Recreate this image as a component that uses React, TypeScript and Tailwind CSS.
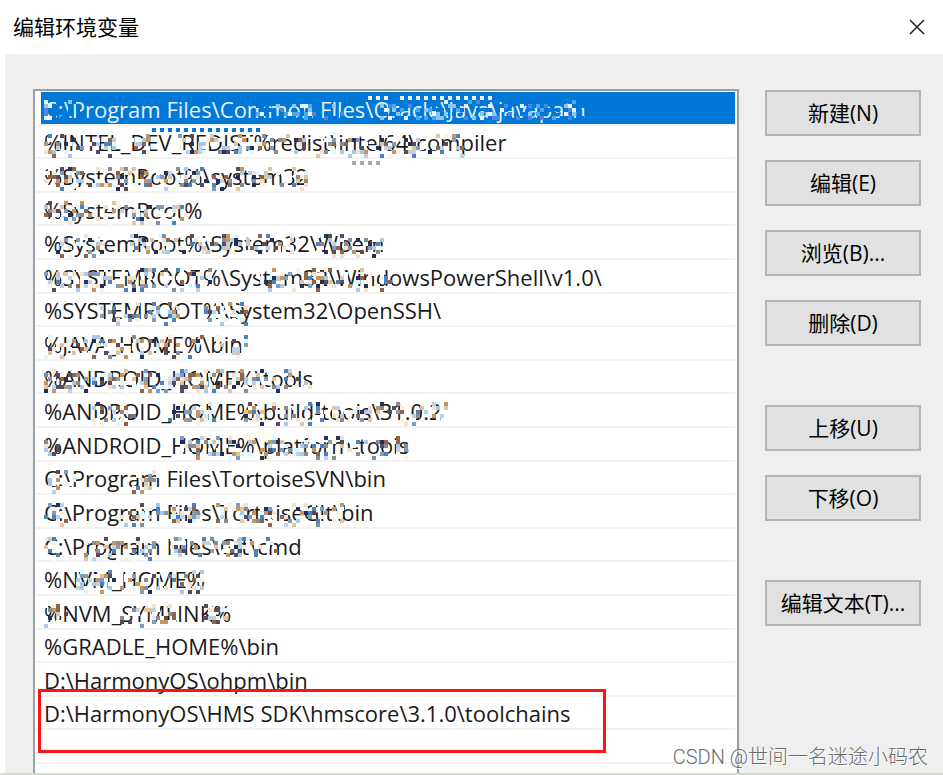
import { useState } from "react";

type Range = [number, number];

interface Dots {
  from: number;
  to: number;
  y: number;
  color: string;
}

interface Entry {
  path: string;
  // horizontal spans of the row that are scrambled, measured from the text start
  masked?: Range[];
  dots?: Dots[];
}

const ENTRIES: Entry[] = [
  {
    path: "C:\\Program Files\\Common Files\\Oracle\\Java\\javapath",
    masked: [[0, 40], [212, 300], [336, 540]],
    dots: [
      { from: 324, to: 344, y: -4, color: "#f1f1f1" },
      { from: 356, to: 450, y: -4, color: "#f1f1f1" },
      { from: 108, to: 216, y: 28, color: "#0078d7" },
    ],
  },
  {
    path: "%INTEL_DEV_REDIST%redist\\intel64\\compiler",
    masked: [[0, 72], [86, 104], [134, 260], [272, 420]],
    dots: [{ from: 308, to: 336, y: 27, color: "#a6a6ac" }],
  },
  { path: "%SystemRoot%\\system32", masked: [[0, 264]] },
  { path: "%SystemRoot%", masked: [[0, 144]] },
  { path: "%SystemRoot%\\System32\\Wbem", masked: [[12, 64], [86, 250], [272, 340]] },
  { path: "%SYSTEMROOT%\\System32\\WindowsPowerShell\\v1.0\\", masked: [[0, 166], [212, 348]] },
  { path: "%SYSTEMROOT%\\System32\\OpenSSH\\", masked: [[56, 136], [160, 204]] },
  { path: "%JAVA_HOME%\\bin", masked: [[0, 204]] },
  { path: "%ANDROID_HOME%\\tools", masked: [[0, 268]] },
  { path: "%ANDROID_HOME%\\build-tools\\31.0.2", masked: [[48, 96], [124, 172], [200, 402]] },
  { path: "%ANDROID_HOME%\\platform-tools", masked: [[0, 16], [136, 364]] },
  { path: "C:\\Program Files\\TortoiseSVN\\bin", masked: [[0, 32], [88, 114]] },
  { path: "C:\\Program Files\\TortoiseGit\\bin", masked: [[0, 24], [76, 156], [172, 300]] },
  { path: "C:\\Program Files\\Git\\cmd", masked: [[0, 16], [40, 112], [126, 232]] },
  { path: "%NVM_HOME%", masked: [[32, 160]] },
  { path: "%NVM_SYMLINK%", masked: [[0, 24], [76, 132], [160, 188]] },
  { path: "%GRADLE_HOME%\\bin" },
  { path: "D:\\HarmonyOS\\ohpm\\bin" },
  { path: "D:\\HarmonyOS\\HMS SDK\\hmscore\\3.1.0\\toolchains" },
  { path: "" },
];

const BUTTON_GROUPS = [
  ["新建(N)", "编辑(E)", "浏览(B)...", "删除(D)"],
  ["上移(U)", "下移(O)"],
  ["编辑文本(T)..."],
];

const SPECKS = [
  "#24305c", "#8f6449", "#f3e2cb", "#a9c9ea", "#4a82bd", "#dff8ff", "#564a5c", "#c4955c",
  "#ffffff", "#dfc3a2", "#7f9bbd", "#ffffff", "#fdf2dc", "#b9d3ea", "#8b8b92", "#ffffff",
];
const SELECTED_SPECKS = ["#0078d7", "#4aa8ee", "#e6f2fc", "#4d86dc", "#0078d7", "#8cc6f5", "#0078d7"];

function noise(row: number, x: number, y: number) {
  const n = Math.sin(row * 91.7 + x * 12.9898 + y * 78.233) * 43758.5453;
  return n - Math.floor(n);
}

function Mosaic({ row, entry, selected }: { row: number; entry: Entry; selected: boolean }) {
  const colors = selected ? SELECTED_SPECKS : SPECKS;
  const cells = [];
  for (const [from, to] of entry.masked ?? []) {
    for (let x = from; x < to; x += 4) {
      for (let y = 0; y < 6; y++) {
        // the last line only keeps every other cell
        if (y === 5 && (x % 8 !== 0 || selected)) continue;
        const n = noise(row, x, y);
        if (n > (y === 0 ? 0.2 : 0.42)) continue;
        const color = colors[Math.floor(noise(row + 7, x, y) * colors.length)];
        cells.push(<rect key={`${x}-${y}`} x={x} y={y * 4} width="4" height="4" fill={color} />);
      }
    }
  }
  for (const d of entry.dots ?? []) {
    for (let x = d.from; x <= d.to; x += 8) {
      cells.push(<rect key={`dot-${x}-${d.y}`} x={x} y={d.y} width="4" height="4" fill={d.color} />);
    }
  }
  return (
    <svg
      className="pointer-events-none absolute top-2 left-2 h-6 w-[560px] overflow-visible"
      shapeRendering="crispEdges"
      aria-hidden="true"
    >
      {cells}
    </svg>
  );
}

function EntryRow({ entry, index, selected, onSelect }: { entry: Entry; index: number; selected: boolean; onSelect: () => void }) {
  return (
    <li className="relative flex min-h-8 flex-1 border-b-2 border-[#f3f3f3]">
      <button
        type="button"
        aria-label={entry.path || "空行"}
        className={`ml-[5px] flex flex-1 items-center pt-0.5 pl-[3px] text-left whitespace-pre ${
          selected ? "bg-[#0078d7] text-[#e6f2fc]" : "text-[#1a1a1a]"
        }`}
        onClick={onSelect}
      >
        {entry.path}
      </button>
      {entry.masked && <Mosaic row={index} entry={entry} selected={selected} />}
      {index === 18 && (
        <span className="pointer-events-none absolute -top-2 left-0.5 z-10 h-16 w-[568px] border-3 border-[#fb1414]" />
      )}
    </li>
  );
}

export default function App() {
  const [selected, setSelected] = useState(0);

  return (
    <div className="relative flex min-h-screen flex-col bg-white pl-[5px] font-['Open_Sans','Noto_Sans_CJK_SC',sans-serif] text-black">
      {/* Title bar */}
      <header className="flex h-[54px] items-center justify-between pr-[18px] pl-2">
        <h1 className="text-[21px] leading-7">编辑环境变量</h1>
        <button type="button" aria-label="关闭">
          <svg className="size-4" viewBox="0 0 16 16" fill="none" stroke="#222" strokeWidth="1.5">
            <path d="M1 1l14 14M15 1L1 15" />
          </svg>
        </button>
      </header>

      <main className="flex flex-1 gap-[26px] bg-[#efefef] pt-[35px] pr-[22px] pl-7">
        {/* Path list */}
        <ul className="flex flex-1 flex-col border-2 border-b-0 border-[#9a9fa6] bg-white pt-px pr-0.5 pb-[9px] pl-px text-[22px] leading-7">
          {ENTRIES.map((entry, i) => (
            <EntryRow
              key={i}
              entry={entry}
              index={i}
              selected={i === selected}
              onSelect={() => setSelected(i)}
            />
          ))}
        </ul>

        {/* Actions */}
        <div className="flex w-[156px] shrink-0 flex-col gap-[59px] pt-px">
          {BUTTON_GROUPS.map((group) => (
            <div key={group[0]} className="flex flex-col gap-6">
              {group.map((label) => (
                <button
                  key={label}
                  type="button"
                  className="h-[46px] border-2 border-[#b4b4b4] bg-[#e1e1e1] text-[21px] leading-7 whitespace-nowrap hover:border-[#0078d7] hover:bg-[#e5f1fb]"
                >
                  {label}
                </button>
              ))}
            </div>
          ))}
        </div>
      </main>
      <div className="-ml-[5px] h-0.5 bg-[#d3dcc8]" />

      {/* Watermark */}
      <p className="pointer-events-none absolute right-[15px] bottom-1 font-['Roboto','Noto_Sans_CJK_SC',sans-serif] text-xl leading-7 font-light text-[#6b6b6b] [text-shadow:1px_1px_0_#fff]">
        CSDN @世间一名迷途小码农
      </p>
    </div>
  );
}
